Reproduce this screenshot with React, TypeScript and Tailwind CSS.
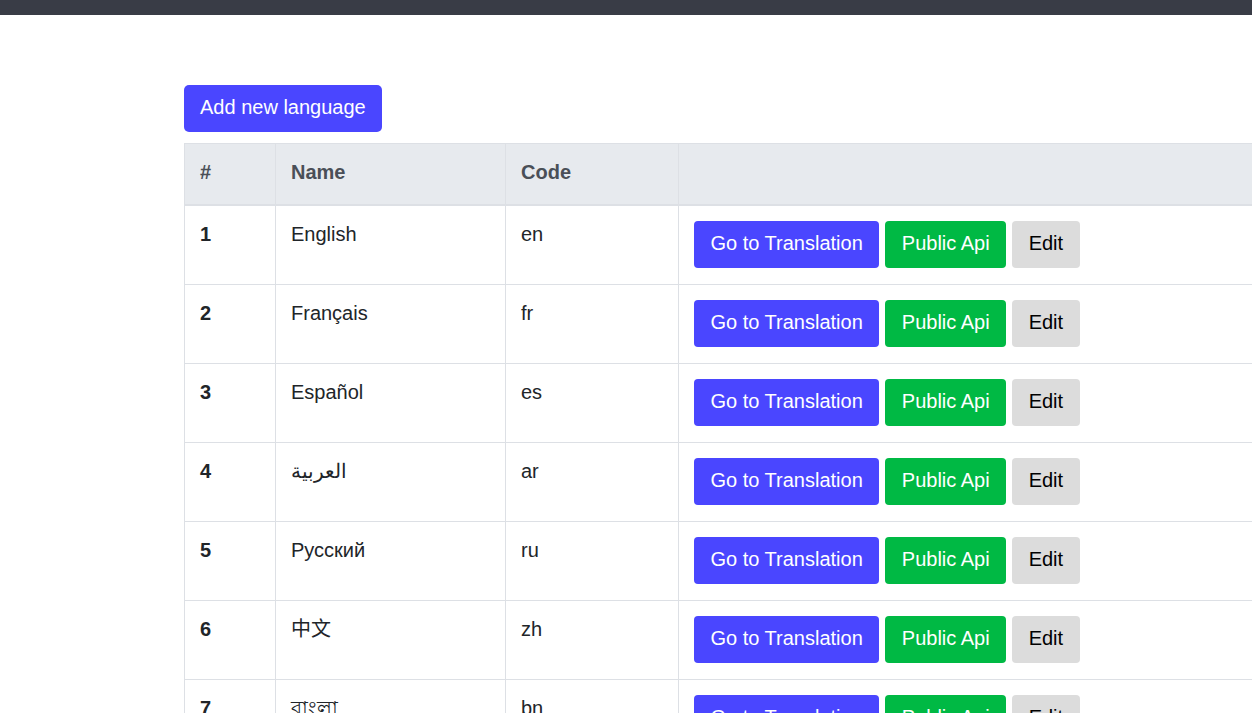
import React from "react";

const languages = [
  { id: 1, name: "English", code: "en" },
  { id: 2, name: "Français", code: "fr" },
  { id: 3, name: "Español", code: "es" },
  { id: 4, name: "العربية", code: "ar" },
  { id: 5, name: "Русский", code: "ru" },
  { id: 6, name: "中文", code: "zh" },
  { id: 7, name: "বাংলা", code: "bn" },
  { id: 8, name: "Deutsch", code: "de" },
];

export default function App() {
  return (
    <div
      className="min-h-screen overflow-hidden bg-white text-[20px] leading-[28px] text-[#212529]"
      style={{ fontFamily: '"Liberation Sans", Arial, "Noto Sans CJK SC", sans-serif' }}
    >
      {/* Top bar */}
      <div className="h-[15px] bg-[#393c46]" />

      <div className="pl-[184px] pt-[70px]">
        <button className="rounded-[5px] bg-[#4a46ff] px-4 pt-2 pb-[11px] text-white">
          Add new language
        </button>

        {/* Languages table */}
        <table className="mt-[11px] w-[1200px] border-collapse text-left">
          <thead>
            <tr className="bg-[#e7eaee] text-[#4a4f57]">
              <th className="w-[91px] border border-b-2 border-[#dde0e5] px-[15px] pt-[14px] pb-[18px] align-top font-bold">#</th>
              <th className="w-[230px] border border-b-2 border-[#dde0e5] px-[15px] pt-[14px] pb-[18px] align-top font-bold">Name</th>
              <th className="w-[173px] border border-b-2 border-[#dde0e5] px-[15px] pt-[14px] pb-[18px] align-top font-bold">Code</th>
              <th className="border border-b-2 border-[#dde0e5] px-[15px] pt-[14px] pb-[18px]"></th>
            </tr>
          </thead>
          <tbody>
            {languages.map((lang) => (
              <tr key={lang.id}>
                <td className="border border-[#dde0e5] px-[15px] pt-[15px] pb-4 align-top leading-[26px] font-bold">{lang.id}</td>
                <td className="border border-[#dde0e5] px-[15px] pt-[15px] pb-4 align-top leading-[26px]">{lang.name}</td>
                <td className="border border-[#dde0e5] px-[15px] pt-[15px] pb-4 align-top leading-[26px]">{lang.code}</td>
                <td className="border border-[#dde0e5] px-[15px] pt-[15px] pb-4 align-top">
                  <div className="flex gap-[6px]">
                    <button className="rounded-[4px] bg-[#4a46ff] px-[16.5px] pt-2 pb-[11px] text-white">
                      Go to Translation
                    </button>
                    <button className="rounded-[4px] bg-[#00b944] px-[16.5px] pt-2 pb-[11px] text-white">
                      Public Api
                    </button>
                    <button className="rounded-[4px] bg-[#dcdcdc] px-[16.5px] pt-2 pb-[11px] text-black">
                      Edit
                    </button>
                  </div>
                </td>
              </tr>
            ))}
          </tbody>
        </table>
      </div>
    </div>
  );
}
